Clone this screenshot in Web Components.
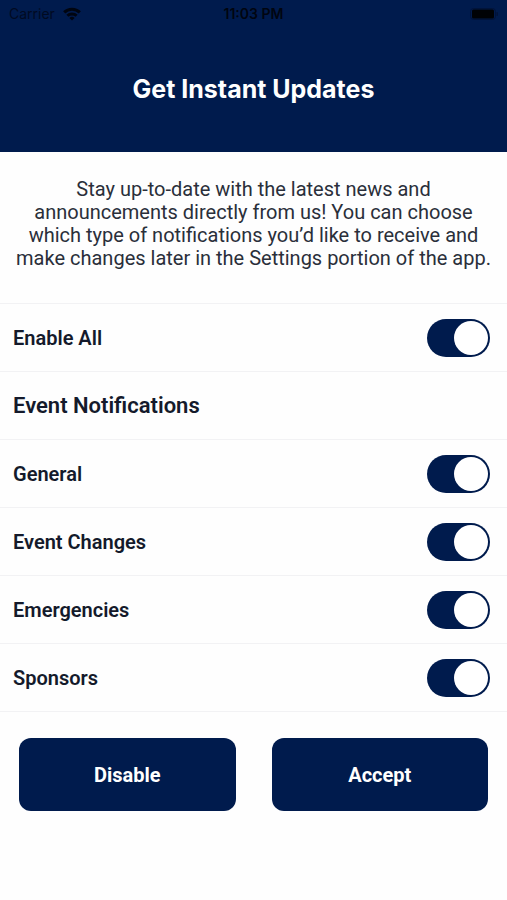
<!DOCTYPE html>
<html lang="en">
<head>
<meta charset="utf-8">
<meta name="viewport" content="width=device-width, initial-scale=1">
<title>Get Instant Updates</title>
<style>
	body {
		margin: 0;
		min-height: 100vh;
		background: #fefefe;
		color: #141a2b;
		font-family: Roboto, "Liberation Sans", sans-serif;
		font-size: 20px;
		--navy: #001b4d;
		--line: #f2f2f4;
		--gutter: 13px;
	}
</style>
</head>
<body>
<updates-screen>
	<status-bar slot="status" carrier="Carrier" time="11:03 PM"></status-bar>
	<span slot="title">Get Instant Updates</span>
	<span slot="intro">Stay up-to-date with the latest news and announcements directly from us! You can choose which type of notifications you’d like to receive and make changes later in the Settings portion of the app.</span>

	<toggle-row checked>Enable All</toggle-row>
	<section-row>Event Notifications</section-row>
	<toggle-row checked>General</toggle-row>
	<toggle-row checked>Event Changes</toggle-row>
	<toggle-row checked>Emergencies</toggle-row>
	<toggle-row checked>Sponsors</toggle-row>

	<action-button slot="actions">Disable</action-button>
	<action-button slot="actions">Accept</action-button>
</updates-screen>

<script>
// phone status bar: carrier and wifi on the left, time in the middle, battery on the right
class StatusBar extends HTMLElement {
	constructor() {
		super();
		this.attachShadow({mode: 'open'});
	}

	connectedCallback() {
		this.shadowRoot.innerHTML = `
		<style>
			:host {
				display: grid;
				grid-template-columns: 1fr auto 1fr;
				align-items: center;
				height: 28px;
				padding: 0 9px;
				font: 14px/28px Inter, "Liberation Sans", sans-serif;
				color: #000510;
			}
			.carrier {
				display: flex;
				align-items: center;
				gap: 8px;
				color: #000a22;
			}
			.time {
				font-weight: 600;
			}
			.battery {
				justify-self: end;
			}
			svg {
				display: block;
			}
		</style>
		<div class="carrier">
			<span>${this.getAttribute('carrier')}</span>
			<svg width="18" height="14" viewBox="0 0 18 14" fill="none" stroke="#000510" stroke-width="3" aria-hidden="true">
				<path d="M1.2 5.4a11 11 0 0 1 15.6 0"/>
				<path d="M4.4 8.8a6.5 6.5 0 0 1 9.2 0"/>
				<path d="M9 13.6 6.4 11a3.7 3.7 0 0 1 5.2 0z" fill="#000510" stroke="none"/>
			</svg>
		</div>
		<span class="time">${this.getAttribute('time')}</span>
		<svg class="battery" width="28" height="12" viewBox="0 0 28 12" aria-hidden="true">
			<rect x=".5" y=".5" width="25" height="11" rx="3" fill="none" stroke="#00133a"/>
			<rect x="2" y="1.5" width="22" height="9" rx="1.5" fill="#000205"/>
			<path d="M26.5 4v4a2 2 0 0 0 0-4z" fill="#00133a"/>
		</svg>`;
	}
}

// one setting with its switch, the label text is slotted
class ToggleRow extends HTMLElement {
	constructor() {
		super();
		this.attachShadow({mode: 'open'});
		this.shadowRoot.innerHTML = `
		<style>
			:host {
				display: flex;
				align-items: center;
				justify-content: space-between;
				box-sizing: border-box;
				min-height: 68px;
				padding: 0 17px 0 var(--gutter);
				border-bottom: 1px solid var(--line);
				font-weight: 600;
			}
			label {
				flex: 1;
			}
			input {
				appearance: none;
				display: flex;
				box-sizing: border-box;
				width: 63px;
				height: 38px;
				margin: 0;
				padding: 2px;
				border-radius: 19px;
				background: #c9ccd4;
				cursor: pointer;
			}
			input::before {
				content: "";
				width: 34px;
				height: 34px;
				border-radius: 50%;
				background: #fff;
			}
			input:checked {
				justify-content: flex-end;
				background: var(--navy);
			}
		</style>
		<label for="toggle"><slot></slot></label>
		<input type="checkbox" id="toggle">`;
	}

	connectedCallback() {
		this.shadowRoot.querySelector('input').checked = this.hasAttribute('checked');
	}
}

// heading between groups of settings
class SectionRow extends HTMLElement {
	constructor() {
		super();
		this.attachShadow({mode: 'open'});
		this.shadowRoot.innerHTML = `
		<style>
			:host {
				display: flex;
				align-items: center;
				box-sizing: border-box;
				min-height: 68px;
				padding: 0 var(--gutter);
				border-bottom: 1px solid var(--line);
			}
			h2 {
				margin: 0;
				font-size: 22px;
				font-weight: 600;
			}
		</style>
		<h2><slot></slot></h2>`;
	}
}

class ActionButton extends HTMLElement {
	constructor() {
		super();
		this.attachShadow({mode: 'open'});
		this.shadowRoot.innerHTML = `
		<style>
			:host {
				display: block;
				flex: 1;
			}
			button {
				width: 100%;
				height: 73px;
				padding: 0 16px;
				border: 0;
				border-radius: 12px;
				background: var(--navy);
				color: #fff;
				font: inherit;
				font-weight: 700;
				cursor: pointer;
			}
		</style>
		<button type="button"><slot></slot></button>`;
	}
}

// whole screen: header, intro text, list of settings and the two buttons
class UpdatesScreen extends HTMLElement {
	constructor() {
		super();
		this.attachShadow({mode: 'open'});
		this.shadowRoot.innerHTML = `
		<style>
			:host {
				display: block;
			}
			header {
				background: var(--navy);
				color: #fff;
			}
			h1 {
				margin: 0;
				padding: 45px 16px 46px;
				font: 700 25px/33px Inter, "Open Sans", sans-serif;
				text-align: center;
			}
			p {
				margin: 0;
				padding: 26px var(--gutter) 33px;
				border-bottom: 1px solid var(--line);
				color: #2a2f3a;
				line-height: 23px;
				text-align: center;
			}
			.actions {
				display: flex;
				gap: 36px;
				padding: 26px 19px;
			}
		</style>
		<header>
			<slot name="status"></slot>
			<h1><slot name="title"></slot></h1>
		</header>
		<main>
			<p><slot name="intro"></slot></p>
			<slot></slot>
			<div class="actions"><slot name="actions"></slot></div>
		</main>`;
	}
}

customElements.define('status-bar', StatusBar);
customElements.define('toggle-row', ToggleRow);
customElements.define('section-row', SectionRow);
customElements.define('action-button', ActionButton);
customElements.define('updates-screen', UpdatesScreen);
</script>
</body>
</html>
